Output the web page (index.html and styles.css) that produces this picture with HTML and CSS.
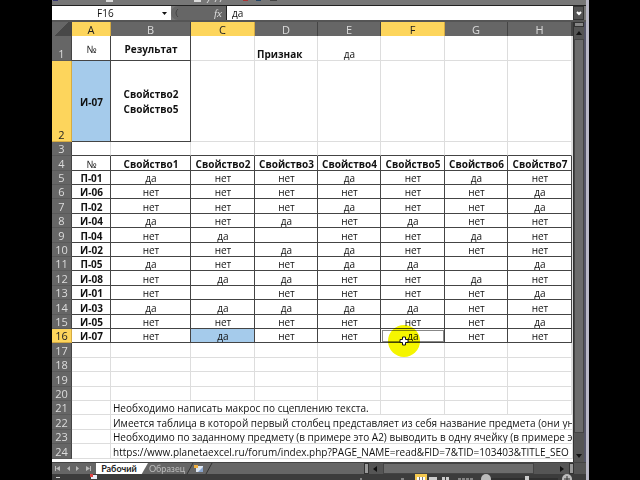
FILE: index.html
```
<!DOCTYPE html>
<html lang="ru">
<head>
    <meta charset="utf-8">
    <title>Рабочий</title>
    <link rel="stylesheet" href="styles.css">
</head>
<body>
    <div class="app">
        <div class="ribbon">
            <svg class="ribbon-icons" width="80" height="3" viewBox="0 0 80 3">
                <path d="M1 0h5v1h-5z" fill="#34346e"/>
                <path d="M54 0h7v2h-7z" fill="#ddd"/>
            </svg>
            <svg class="ribbon-icons" width="120" height="3" viewBox="0 0 120 3">
                <path d="M8 0h7v2h-7z" fill="#ddd"/>
                <path d="M23 0l-2 3M30 0l-1 2M35 0l-1 2" stroke="#ddd"/>
                <path d="M57 0h5v1h-5z" fill="#a33"/>
                <path d="M70 0h5v1h-5z" fill="#246"/>
                <path d="M84 0h7v1h-7z" fill="#444"/>
            </svg>
        </div>
        <div class="formula-bar">
            <button class="name-box" type="button">F16<svg width="5" height="3" viewBox="0 0 5 3"><path d="M0 0h5L2.5 3z" fill="#111"/></svg></button>
            <div class="fx"><svg width="6" height="12" viewBox="0 0 6 12"><path d="M5 2a5 5 0 0 0 0 8" fill="none" stroke="#444"/></svg><i>fx</i></div>
            <input class="formula" type="text" value="да" aria-label="Формула">
            <button class="expand" type="button" aria-label="Развернуть"><svg width="6" height="5" viewBox="0 0 6 5"><path d="M1 1l2 2 2-2" fill="none" stroke="#fff" stroke-width="2"/></svg></button>
        </div>
        <div class="sheet">
            <div class="grid">
                <table>
                    <colgroup>
                        <col class="c-num"><col class="c-a"><col class="c-b"><col class="c-m"><col class="c-s"><col class="c-s"><col class="c-m"><col class="c-s"><col class="c-m"><col>
                    </colgroup>
                    <thead>
                        <tr><th class="corner"></th><th class="active">A</th><th>B</th><th class="active">C</th><th>D</th><th>E</th><th class="active">F</th><th>G</th><th>H</th><th></th></tr>
                    </thead>
                    <tbody>
                        <tr class="row-1"><th>1</th><td class="box">№</td><td class="box bold">Результат</td><td></td><td class="bold left low">Признак</td><td class="low">да</td><td></td><td></td><td></td><td></td></tr>
                        <tr class="row-2"><th class="active">2</th><td class="box bold blue">И-07</td><td class="box bold">Свойство2<br>Свойство5</td><td></td><td></td><td></td><td></td><td></td><td></td><td></td></tr>
                        <tr class="over"><th>3</th><td></td><td></td><td></td><td></td><td></td><td></td><td></td><td></td><td></td></tr>
                        <tr class="data head"><th>4</th><td>№</td><td>Свойство1</td><td>Свойство2</td><td>Свойство3</td><td>Свойство4</td><td>Свойство5</td><td>Свойство6</td><td>Свойство7</td><td></td></tr>
                        <tr class="data"><th>5</th><td>П-01</td><td>да</td><td>нет</td><td>нет</td><td>да</td><td>нет</td><td>да</td><td>нет</td><td></td></tr>
                        <tr class="data"><th>6</th><td>И-06</td><td>нет</td><td>нет</td><td>нет</td><td>нет</td><td>нет</td><td>нет</td><td>да</td><td></td></tr>
                        <tr class="data"><th>7</th><td>П-02</td><td>нет</td><td>нет</td><td>нет</td><td>да</td><td>нет</td><td>нет</td><td>да</td><td></td></tr>
                        <tr class="data"><th>8</th><td>И-04</td><td>да</td><td>нет</td><td>да</td><td>нет</td><td>да</td><td>нет</td><td>нет</td><td></td></tr>
                        <tr class="data"><th>9</th><td>П-04</td><td>нет</td><td>да</td><td></td><td>нет</td><td>нет</td><td>да</td><td>нет</td><td></td></tr>
                        <tr class="data"><th>10</th><td>И-02</td><td>нет</td><td>нет</td><td>да</td><td>да</td><td>нет</td><td>нет</td><td>нет</td><td></td></tr>
                        <tr class="data"><th>11</th><td>П-05</td><td>да</td><td>нет</td><td>нет</td><td>да</td><td>да</td><td></td><td>да</td><td></td></tr>
                        <tr class="data"><th>12</th><td>И-08</td><td>нет</td><td>да</td><td>да</td><td>нет</td><td>нет</td><td>да</td><td>нет</td><td></td></tr>
                        <tr class="data"><th>13</th><td>И-01</td><td>нет</td><td></td><td>нет</td><td>нет</td><td>нет</td><td>нет</td><td>да</td><td></td></tr>
                        <tr class="data"><th>14</th><td>И-03</td><td>да</td><td>да</td><td>да</td><td>да</td><td>да</td><td>нет</td><td>нет</td><td></td></tr>
                        <tr class="data"><th>15</th><td>И-05</td><td>нет</td><td>нет</td><td>нет</td><td>нет</td><td>нет</td><td>нет</td><td>да</td><td></td></tr>
                        <tr class="data"><th class="active">16</th><td>И-07</td><td>нет</td><td class="blue">да</td><td>нет</td><td>нет</td>
                            <td class="selected">да
                                <svg class="pointer" width="34" height="34" viewBox="0 0 34 34">
                                    <circle cx="17" cy="17" r="16" fill="#f5f500"/>
                                </svg>
                                <svg class="cross" width="10" height="10" viewBox="0 0 10 10">
                                    <path d="M3.500 1h3v2.500h2.500v3h-2.500v2.500h-3v-2.500h-2.500v-3h2.500z" fill="#fff" stroke="#111"/>
                                </svg>
                            </td>
                            <td>нет</td><td>нет</td><td></td></tr>
                        <tr><th>17</th><td></td><td></td><td></td><td></td><td></td><td></td><td></td><td></td><td></td></tr>
                        <tr><th>18</th><td></td><td></td><td></td><td></td><td></td><td></td><td></td><td></td><td></td></tr>
                        <tr><th>19</th><td></td><td></td><td></td><td></td><td></td><td></td><td></td><td></td><td></td></tr>
                        <tr><th>20</th><td></td><td></td><td></td><td></td><td></td><td></td><td></td><td></td><td></td></tr>
                        <tr><th>21</th><td></td><td class="left" colspan="4">Необходимо написать макрос по сцеплению текста.</td><td></td><td></td><td></td><td></td></tr>
                        <tr><th>22</th><td></td><td class="left" colspan="8">Имеется таблица в которой первый столбец представляет из себя название предмета (они уни</td></tr>
                        <tr><th>23</th><td></td><td class="left" colspan="8">Необходимо по заданному предмету (в примере это А2) выводить в одну ячейку (в примере эт</td></tr>
                        <tr><th>24</th><td></td><td class="left" colspan="8">https://www.planetaexcel.ru/forum/index.php?PAGE_NAME=read&amp;FID=7&amp;TID=103403&amp;TITLE_SEO</td></tr>
                    </tbody>
                </table>
            </div>
            <div class="scroll-v">
                <span class="split"></span>
                <button type="button" aria-label="Вверх"><svg width="6" height="4" viewBox="0 0 6 4"><path d="M0 4h6L3 0z" fill="#111"/></svg></button>
                <div class="thumb-v"></div>
                <button class="down" type="button" aria-label="Вниз"><svg width="6" height="4" viewBox="0 0 6 4"><path d="M0 0h6L3 4z" fill="#111"/></svg></button>
            </div>
        </div>
        <div class="tabs">
            <svg class="nav" width="44" height="11" viewBox="0 0 44 11">
                <path d="M3.500 3v5M38.500 3v5" stroke="#bbb"/>
                <path d="M8 3v5L4 5.500zM18 3v5l-3-2.500zM24 3v5l3-2.500zM34 3v5l4-2.500z" fill="#bbb"/>
            </svg>
            <a class="tab current" href="#">Рабочий</a>
            <a class="tab" href="#">Образец</a>
            <svg class="new-tab" width="28" height="11" viewBox="0 0 28 11">
                <path d="M1 11L7 0M20 11L26 0" stroke="#333" fill="none"/>
                <path d="M10 3h7v6h-7z" fill="#dde6f2"/>
                <path d="M8 2h4v3h-4z" fill="#f0b040"/>
                <path d="M12 9l5-5v5z" fill="#8aa6d0"/>
            </svg>
            <div class="scroll-h">
                <span class="grip"></span>
                <svg width="14" height="11" viewBox="0 0 14 11"><path d="M8 3v6L4 6z" fill="#111"/></svg>
                <div class="thumb-h"></div>
                <svg class="right" width="12" height="11" viewBox="0 0 12 11"><path d="M3 3v6l4-3z" fill="#111"/></svg>
                <span class="grip"></span>
            </div>
        </div>
        <div class="status">
            <svg width="60" height="6" viewBox="0 0 60 6">
                <path d="M4 3h4v1h-4z" fill="#ccc"/>
                <path d="M39 1h6v4h-6z" fill="#e8eef8"/>
                <path d="M38 0h3v3h-3z" fill="#d44"/>
            </svg>
            <svg width="230" height="6" viewBox="0 0 230 6">
                <path d="M4 5h2M45 5h3" stroke="#ccc"/>
                <path d="M59 0h12v6h-12z" fill="#f5c94f"/>
                <path d="M61 3h8v3h-8z" fill="#fff"/>
                <path d="M63.500 3v3M66.500 3v3" stroke="#777"/>
                <path d="M73 3h8v3h-8zM86 3h3v3h-3zM90 3h3v3h-3z" fill="#ccc"/>
                <path d="M102 5h15" stroke="#ccc" stroke-dasharray="3 1"/>
                <path d="M133 5h69" stroke="#222"/>
                <circle cx="130" cy="5" r="5" fill="#bbb"/>
                <path d="M169 2h4v4h-4z" fill="#ccc"/>
                <circle cx="211" cy="5" r="5" fill="#bbb"/>
                <path d="M211 2v4M208 5h6" stroke="#333"/>
            </svg>
        </div>
    </div>
</body>
</html>
```
FILE: styles.css
```
* {
    box-sizing: border-box;
}
body {
    margin: 0;
    background-color: #000;
    color: #111;
    font-family: "Open Sans", "Noto Sans", sans-serif;
    font-size: 10px;
    line-height: 11px;
}
button {
    padding: 0;
    border: none;
    background: none;
    font: inherit;
    color: inherit;
}
svg {
    display: block;
}
.app {
    display: flex;
    flex-direction: column;
    height: 100vh;
    margin: 0 51px 0 52px;
    border-right: 3px solid #b9b8c6;
    overflow: hidden;
    background-color: #666;
}
.ribbon {
    display: flex;
    justify-content: space-between;
    flex: none;
    height: 6px;
    padding-right: 280px;
    background-color: #777;
    border-bottom: 1px solid #222;
}

/* formula bar */
.formula-bar {
    display: flex;
    flex: none;
    height: 16px;
    padding-right: 2px;
    background-color: #777;
    border-bottom: 2px solid #555;
}
.name-box {
    display: flex;
    align-items: center;
    justify-content: space-between;
    width: 119px;
    height: 14px;
    padding: 0 4px 0 45px;
    background-color: #fff;
}
.fx {
    display: flex;
    align-items: center;
    justify-content: space-between;
    width: 56px;
    height: 14px;
    padding: 0 4px 0 2px;
    border-right: 1px solid #222;
    border-radius: 7px 0 0 7px;
    background-color: #666;
    color: #ddd;
    font-family: "Liberation Serif", serif;
    font-size: 11px;
}
.formula {
    flex: 1;
    min-width: 0;
    height: 14px;
    padding: 0 5px;
    border: none;
    font: inherit;
    color: inherit;
}
.expand {
    display: flex;
    align-items: center;
    justify-content: center;
    width: 11px;
    height: 14px;
    border: 1px solid #333;
    background-color: #555;
}

/* cells */
.sheet {
    display: flex;
    flex: 1;
    min-height: 0;
    border-right: 2px solid #555568;
}
.grid {
    flex: 1;
    min-width: 0;
    overflow: hidden;
    background-color: #fff;
}
table {
    width: 100%;
    table-layout: fixed;
    border-spacing: 0;
}
.c-num { width: 20px; }
.c-a { width: 39px; }
.c-b { width: 80px; }
.c-s { width: 63px; }
.c-m { width: 64px; }
tr {
    height: 14px;
}
tbody tr:nth-child(5n+2),
tbody tr:nth-child(5n+4) {
    height: 15px;
}
tbody tr.row-1 {
    height: 25px;
}
tbody tr.row-2 {
    height: 81px;
}
th {
    padding: 0;
    border-right: 1px solid #444;
    background-color: #666;
    color: #ddd;
    font-size: 11px;
    line-height: 13px;
    font-weight: normal;
    vertical-align: bottom;
}
tbody th {
    border-bottom: 1px solid #5a5a5a;
}
th.active {
    background-color: #fdd55c;
    border-color: #d5ab43;
    color: #222;
}
.corner {
    background: linear-gradient(135deg, #666 50%, #484848 50%);
}
td {
    padding: 2px 0 0 1px;
    border-right: 1px solid #ddd;
    border-bottom: 1px solid #ddd;
    text-align: center;
    white-space: nowrap;
    overflow: hidden;
}
td.left {
    padding-left: 2px;
    text-align: left;
}
td.low {
    vertical-align: bottom;
}
td.box {
    border-color: #444;
    line-height: 15px;
}
.bold,
.data.head td,
.data td:nth-child(2) {
    font-weight: bold;
}
.data.head td:nth-child(2) {
    font-weight: normal;
}
.over td,
.data td {
    border-bottom-color: #444;
}
.data td {
    border-right-color: #444;
}
td:last-child,
.data td:last-child {
    border-color: #ddd;
}
td.blue {
    background-color: #a5cbeb;
}
td.selected {
    position: relative;
    overflow: visible;
    outline: 1px solid #888;
    outline-offset: -2px;
}
.pointer {
    position: absolute;
    left: 6px;
    top: -5px;
    mix-blend-mode: multiply;
}
.cross {
    position: absolute;
    left: 18px;
    top: 7px;
}

/* scrollbars */
.scroll-v {
    display: flex;
    flex-direction: column;
    flex: none;
    width: 11px;
    border-left: 1px solid #333;
    background-color: #555;
}
.split {
    height: 5px;
    border: 1px solid #333;
    background-color: #888;
}
.scroll-v button {
    display: flex;
    align-items: center;
    justify-content: center;
    height: 12px;
}
.thumb-v {
    flex: 1;
    border: 1px solid #444;
    background-color: #6c6c6c;
}
.scroll-v button.down {
    height: 29px;
    padding-top: 16px;
}

/* sheet tabs */
.tabs {
    display: flex;
    flex: none;
    height: 12px;
    background-color: #666;
    border-top: 1px solid #444;
    font-family: Lato, sans-serif;
    font-size: 9px;
    line-height: 11px;
}
.tab {
    width: 38px;
    color: #bbb;
    text-align: center;
    text-decoration: none;
}
.tab.current {
    width: 52px;
    padding-right: 6px;
    background-color: #fff;
    color: #222;
    font-weight: bold;
    clip-path: polygon(0 0, 100% 0, 88% 100%, 0 100%);
}
.scroll-h {
    display: flex;
    flex: 1;
    margin-left: 150px;
    padding-right: 12px;
    background-color: #555;
}
.grip {
    width: 5px;
    border: 1px solid #333;
    background-color: #999;
}
.thumb-h {
    flex: 1;
    margin-right: 23px;
    border: 1px solid #444;
    background-color: #6c6c6c;
}
.status {
    display: flex;
    justify-content: space-between;
    flex: none;
    height: 6px;
    background-color: #3c3c3c;
}
```
